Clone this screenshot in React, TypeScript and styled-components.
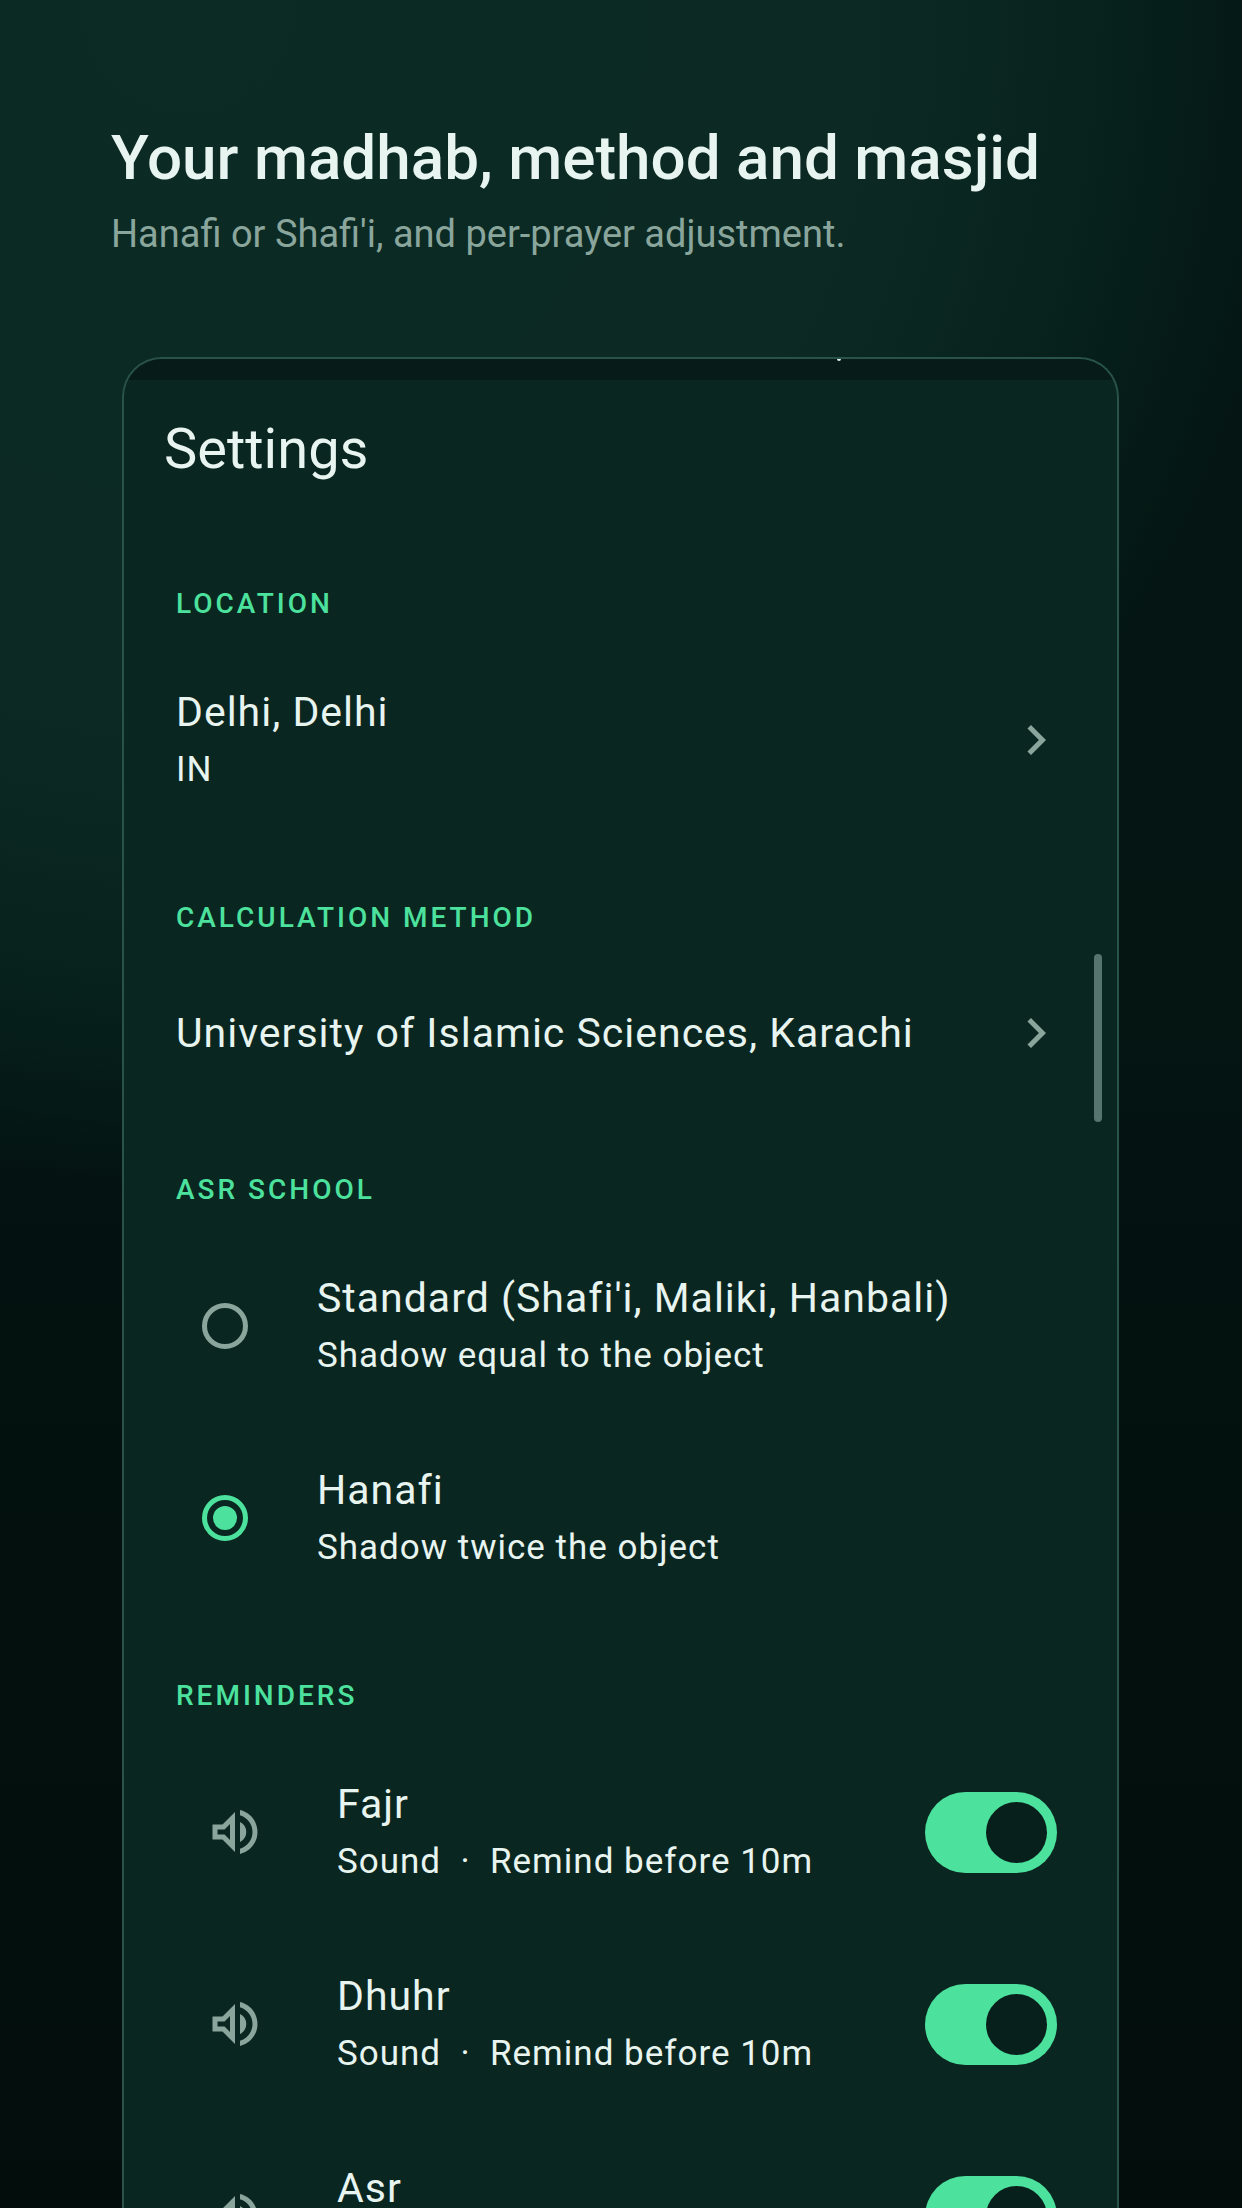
import React, { useState } from "react";
import styled, { createGlobalStyle, css } from "styled-components";
import { MdChevronRight, MdOutlineVolumeUp } from "react-icons/md";

const color = {
  text: "#e8f4ef",
  muted: "#8aa69c",
  accent: "#4ce29e",
  panel: "#0a2620",
  statusBar: "#071c19",
  outline: "#28524a",
  knob: "#07201c",
  thumb: "#56756c",
};

const GlobalStyle = createGlobalStyle`
  *, *::before, *::after { box-sizing: border-box; }
  html { background: #030e0c; }
  body {
    margin: 0;
    font-family: Roboto, "Noto Sans", sans-serif;
    color: ${color.text};
  }
  h1, h2, h3, p { margin: 0; }
`;

const Page = styled.main`
  height: 100vh;
  overflow: hidden;
  display: flex;
  flex-direction: column;
  gap: 95px;
  padding: 122px 112px 0 111px;
  background:
    radial-gradient(1120px 1190px at 15% 0, #0c2b25 0, #0c2923 60%, #0a2620 72%, #061f1a 86%, rgba(4, 22, 19, 0) 100%),
    linear-gradient(#041613 0, #041512 45%, #03110f 60%, #030e0c 100%);
`;

const Hero = styled.header`
  display: flex;
  flex-direction: column;
  gap: 12px;
`;

const Headline = styled.h1`
  font-size: 62px;
  line-height: 72px;
  font-weight: 500;
`;

const Tagline = styled.p`
  font-size: 38px;
  line-height: 56px;
  color: ${color.muted};
`;

const Screen = styled.section`
  position: relative;
  flex: 1 0 auto;
  margin: 0 11px;
  border: 2px solid ${color.outline};
  border-bottom: 0;
  border-radius: 40px 40px 0 0;
  background: ${color.panel};
  overflow: hidden;
`;

const StatusBar = styled.div`
  height: 21px;
  background: ${color.statusBar};
`;

const StatusGlyph = styled.span`
  position: absolute;
  top: 0;
  right: 276px;
  width: 4px;
  height: 2px;
  border-radius: 0 0 2px 2px;
  background: ${color.text};
`;

const ScrollThumb = styled.div`
  position: absolute;
  top: 595px;
  right: 15px;
  width: 8px;
  height: 168px;
  border-radius: 4px;
  background: ${color.thumb};
`;

const AppBar = styled.div`
  display: flex;
  align-items: center;
  height: 138px;
  margin-bottom: 4px;
  padding: 0 40px;
`;

const ScreenTitle = styled.h2`
  font-size: 56px;
  line-height: 72px;
  font-weight: 400;
`;

const Group = styled.section`
  padding-left: 52px;
`;

const GroupLabel = styled.h3`
  padding: 64px 0 22px;
  font-size: 28px;
  line-height: 36px;
  font-weight: 500;
  letter-spacing: 3px;
  text-transform: uppercase;
  color: ${color.accent};
`;

const row = css`
  display: flex;
  align-items: center;
  width: 100%;
  height: 192px;
  cursor: pointer;
`;

const NavRow = styled.button<{ $compact?: boolean }>`
  ${row}
  ${(p) => p.$compact && "height: 150px;"}
  justify-content: space-between;
  padding: 0 51px 0 0;
  border: 0;
  background: none;
  color: inherit;
  font: inherit;
  text-align: left;
`;

const ChoiceRow = styled.label`
  ${row}
  gap: 43px;
  padding-right: 60px;
`;

const Leading = styled.span<{ $width: number }>`
  display: flex;
  flex: none;
  justify-content: center;
  width: ${(p) => p.$width}px;
  color: ${color.muted};
`;

const RowText = styled.span`
  display: flex;
  flex: 1;
  flex-direction: column;
`;

const RowTitle = styled.span`
  font-size: 41px;
  line-height: 60px;
  letter-spacing: 1px;
`;

const RowDetail = styled.span`
  font-size: 35px;
  line-height: 56px;
  letter-spacing: 1px;
  white-space: pre;
`;

const Chevron = styled(MdChevronRight)`
  flex: none;
  width: 60px;
  height: 60px;
  color: ${color.muted};
`;

const SpeakerIcon = styled(MdOutlineVolumeUp)`
  width: 60px;
  height: 60px;
`;

const Radio = styled.input`
  appearance: none;
  display: grid;
  place-items: center;
  width: 46px;
  height: 46px;
  margin: 0;
  border: 5px solid ${color.muted};
  border-radius: 50%;

  &:checked {
    border-color: ${color.accent};
  }

  &:checked::before {
    content: "";
    width: 24px;
    height: 24px;
    border-radius: 50%;
    background: ${color.accent};
  }
`;

const Switch = styled.input`
  appearance: none;
  display: flex;
  flex: none;
  align-items: center;
  width: 132px;
  height: 81px;
  margin: 0;
  padding: 0 10px;
  border-radius: 41px;
  background: ${color.outline};

  &::before {
    content: "";
    width: 61px;
    height: 61px;
    border-radius: 50%;
    background: ${color.knob};
  }

  &:checked {
    justify-content: flex-end;
    background: ${color.accent};
  }
`;

const schools = [
  {
    id: "standard",
    name: "Standard (Shafi'i, Maliki, Hanbali)",
    detail: "Shadow equal to the object",
  },
  { id: "hanafi", name: "Hanafi", detail: "Shadow twice the object" },
];

const prayers = [
  { name: "Fajr", detail: "Sound  ·  Remind before 10m" },
  { name: "Dhuhr", detail: "Sound  ·  Remind before 10m" },
  { name: "Asr" },
];

export default function App() {
  const [school, setSchool] = useState("hanafi");
  const [muted, setMuted] = useState<string[]>([]);

  const toggle = (prayer: string) =>
    setMuted((list) =>
      list.includes(prayer)
        ? list.filter((p) => p !== prayer)
        : [...list, prayer]
    );

  return (
    <>
      <GlobalStyle />
      <Page>
        <Hero>
          <Headline>Your madhab, method and masjid</Headline>
          <Tagline>Hanafi or Shafi'i, and per-prayer adjustment.</Tagline>
        </Hero>

        <Screen>
          <StatusBar>
            <StatusGlyph />
          </StatusBar>
          <AppBar>
            <ScreenTitle>Settings</ScreenTitle>
          </AppBar>

          <Group>
            <GroupLabel>Location</GroupLabel>
            <NavRow type="button">
              <RowText>
                <RowTitle>Delhi, Delhi</RowTitle>
                <RowDetail>IN</RowDetail>
              </RowText>
              <Chevron />
            </NavRow>
          </Group>

          <Group>
            <GroupLabel>Calculation method</GroupLabel>
            <NavRow type="button" $compact>
              <RowText>
                <RowTitle>University of Islamic Sciences, Karachi</RowTitle>
              </RowText>
              <Chevron />
            </NavRow>
          </Group>

          <Group role="radiogroup" aria-labelledby="asr-school">
            <GroupLabel id="asr-school">Asr school</GroupLabel>
            {schools.map((s) => (
              <ChoiceRow key={s.id}>
                <Leading $width={98}>
                  <Radio
                    type="radio"
                    name="school"
                    checked={school === s.id}
                    onChange={() => setSchool(s.id)}
                  />
                </Leading>
                <RowText>
                  <RowTitle>{s.name}</RowTitle>
                  <RowDetail>{s.detail}</RowDetail>
                </RowText>
              </ChoiceRow>
            ))}
          </Group>

          <Group>
            <GroupLabel>Reminders</GroupLabel>
            {prayers.map((prayer) => (
              <ChoiceRow key={prayer.name}>
                <Leading $width={118}>
                  <SpeakerIcon />
                </Leading>
                <RowText>
                  <RowTitle>{prayer.name}</RowTitle>
                  <RowDetail>{prayer.detail ?? " "}</RowDetail>
                </RowText>
                <Switch
                  type="checkbox"
                  role="switch"
                  checked={!muted.includes(prayer.name)}
                  onChange={() => toggle(prayer.name)}
                />
              </ChoiceRow>
            ))}
          </Group>

          <ScrollThumb />
        </Screen>
      </Page>
    </>
  );
}
